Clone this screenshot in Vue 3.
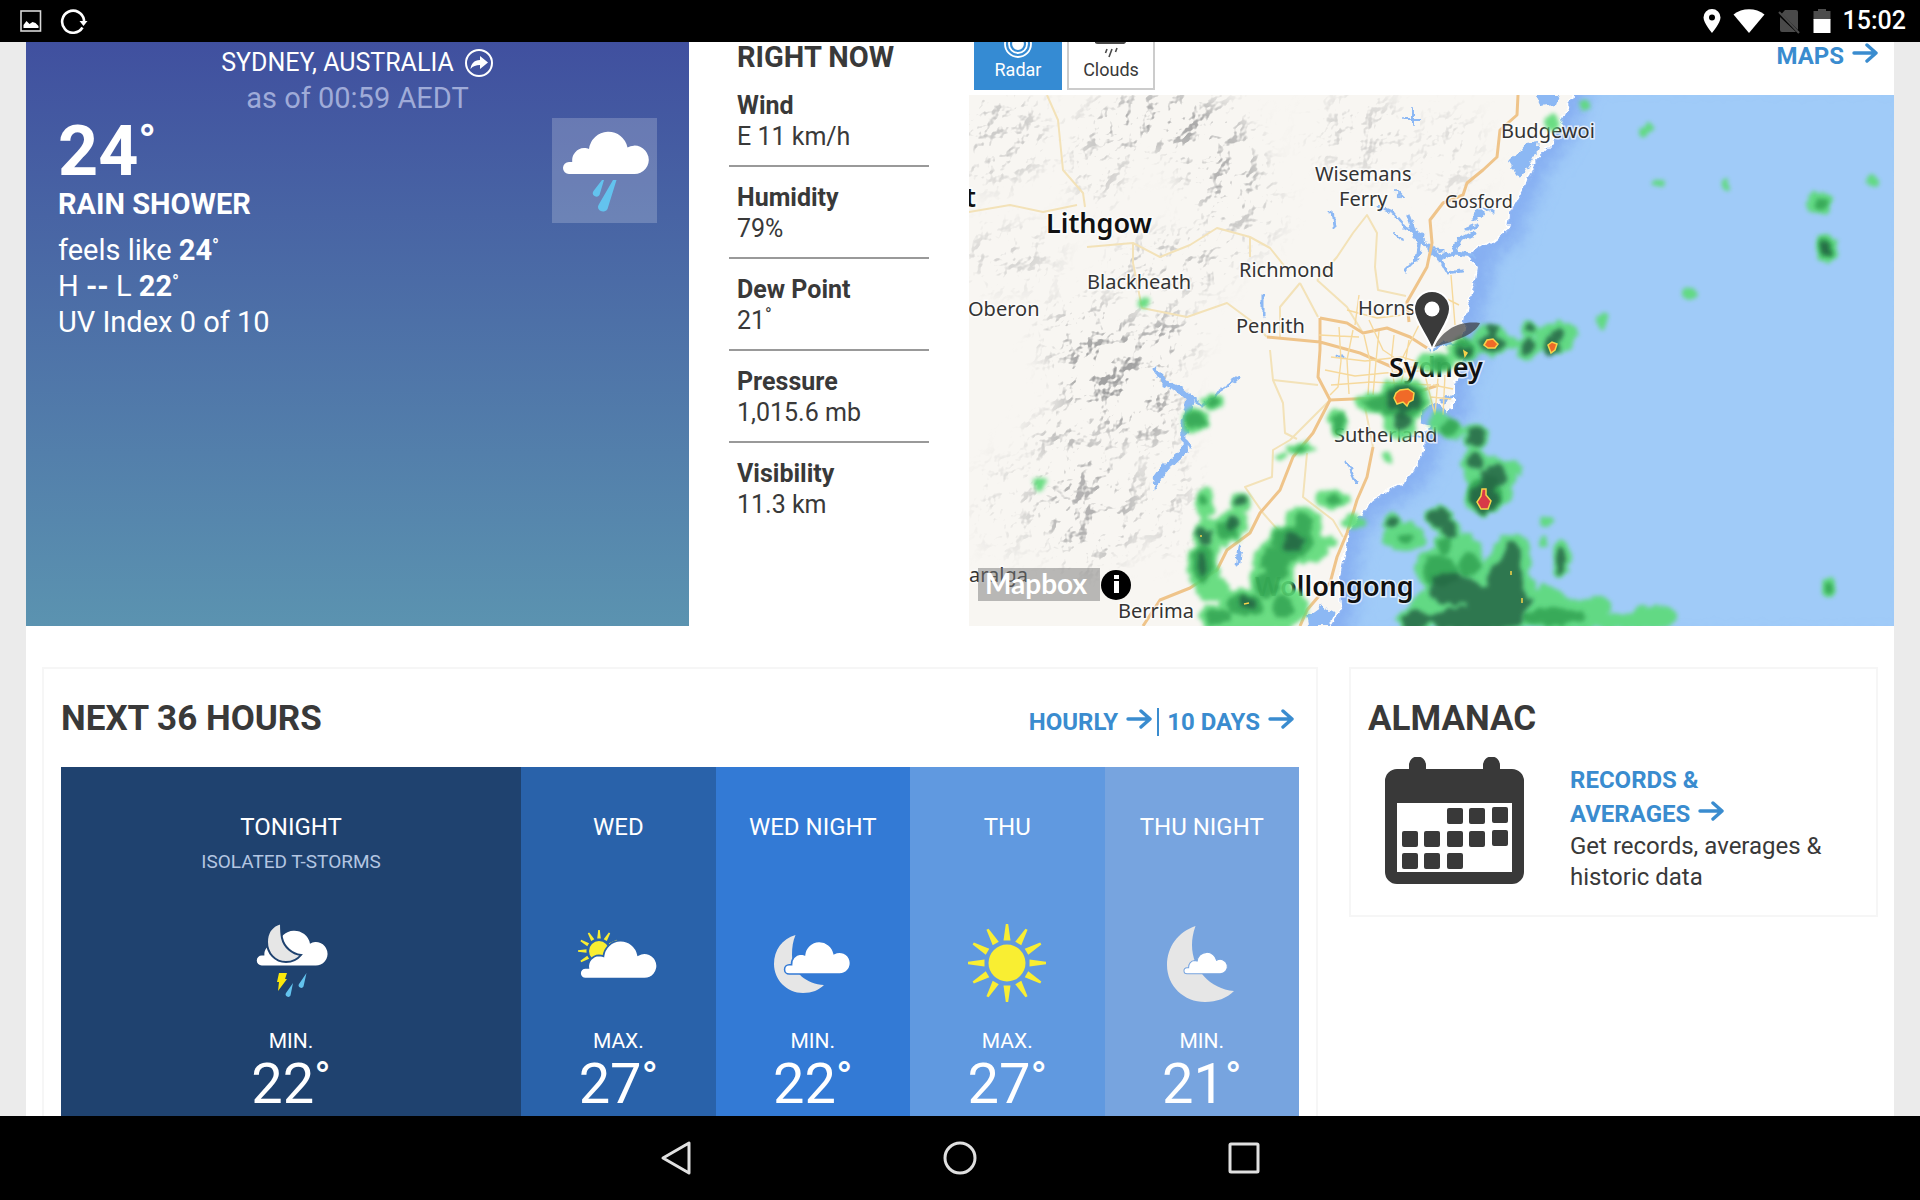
<template>
  <div class="screen">
    <svg class="sprite" aria-hidden="true">
      <symbol id="arrow" viewBox="0 0 26 20">
        <path d="M2 10H24M15 2l9 8-9 8" fill="none" stroke="currentColor" stroke-width="3.4" stroke-linecap="round" stroke-linejoin="round" />
      </symbol>
      <path
        id="cloud"
        d="M17 56a6 6 0 0 1 0-12h3.2A12.5 12.5 0 0 1 32 30c2 0 3.5.4 5 1a19.5 19.5 0 0 1 38.5-1.5A14.2 14.2 0 1 1 82 56z"
      />
    </svg>

    <header class="status-bar">
      <div class="status-left">
        <svg width="22" height="22" viewBox="0 0 22 22">
          <rect x="1" y="1" width="19.5" height="20" fill="none" stroke="#d8d8d8" stroke-width="1.6" />
          <path d="M3.500 18v-3l3-4 3 3 3-2 3 1 3 3v2z" fill="#fff" />
        </svg>
        <svg width="28" height="26" viewBox="0 0 28 26">
          <path d="M22.500 19.500A11 11 0 1 1 24 12v3" fill="none" stroke="#fff" stroke-width="2.6" />
          <path d="M19.500 13h8l-4 5z" fill="#fff" />
        </svg>
      </div>
      <div class="status-right">
        <svg width="18" height="26" viewBox="0 0 18 26">
          <path fill="#fff" fill-rule="evenodd" d="M9 1a8.500 8.500 0 0 1 8.500 8.500C17.500 15 9 25 9 25S.5 15 .5 9.500A8.500 8.500 0 0 1 9 1zm0 5.500a3 3 0 1 0 0 6 3 3 0 0 0 0-6z" />
        </svg>
        <svg width="32" height="26" viewBox="0 0 32 26">
          <path fill="#fff" d="M0.500 6.500C9-.5 23-.5 31.500 6.500L16 25z" />
        </svg>
        <svg width="24" height="26" viewBox="0 0 24 26">
          <path fill="#4a4a4a" d="M8 2h11a2 2 0 0 1 2 2v18L4.500 6zM3 9l16 15H5a2 2 0 0 1-2-2z" />
          <path d="M2 4l20 21" stroke="#4a4a4a" stroke-width="2" />
        </svg>
        <svg width="18" height="26" viewBox="0 0 18 26">
          <path fill="#4d4d4d" d="M5 1h8v2h4.500v9H.5V3H5z" />
          <path fill="#fff" d="M.5 11h17v14H.5z" />
        </svg>
        <span class="clock">15:02</span>
      </div>
    </header>

    <main class="page">
      <div class="sheet">
        <section class="overview">
          <div class="current">
            <p class="place">
              SYDNEY, AUSTRALIA
              <button class="share" type="button" aria-label="Share">
                <svg width="30" height="30" viewBox="0 0 30 30">
                  <circle cx="15" cy="15" r="13" fill="none" stroke="#fff" stroke-width="2" />
                  <path d="M16 8l8 6.500-8 6.500v-4c-4 0-7 1-9.500 4C7 16 10 12 16 12z" fill="#fff" />
                </svg>
              </button>
            </p>
            <p class="as-of">as of 00:59 AEDT</p>
            <div class="now">
              <div>
                <p class="now-temp">24<span class="deg">°</span></p>
                <p class="phrase">RAIN SHOWER</p>
                <p class="facts">feels like <b>24<span class="deg">°</span></b></p>
                <p>H <b>--</b> L <b>22<span class="deg">°</span></b></p>
                <p>UV Index 0 of 10</p>
              </div>
              <svg class="now-icon" viewBox="0 0 105 105">
                <use href="#cloud" fill="#fff" />
                <path d="M61 62 46.500 87a5 4.500 0 0 0 9 4L64.500 62zM50 62 41.500 73a3 3 0 0 0 6 4L52 62z" fill="#63c3ee" />
              </svg>
            </div>
          </div>

          <div class="right-now">
            <h2>RIGHT NOW</h2>
            <dl>
              <div v-for="d in details" :key="d.label" class="detail">
                <dt>{{ d.label }}</dt>
                <dd>{{ d.value }}<span v-if="d.degree" class="deg">°</span></dd>
              </div>
            </dl>
          </div>

          <div class="radar">
            <div class="radar-head">
              <button class="tab active" type="button">
                <svg width="28" height="28" viewBox="0 0 28 28" fill="none" stroke="#fff" stroke-width="1.8">
                  <circle cx="14" cy="14" r="13" />
                  <circle cx="14" cy="14" r="9" />
                  <circle cx="14" cy="14" r="5" fill="#fff" />
                </svg>
                Radar
              </button>
              <button class="tab" type="button">
                <svg width="32" height="28" viewBox="0 0 32 28">
                  <path d="M3 14a4 4 0 0 1 0-8C5 0 12-4 18 1c6-2 10 0 11 5a4.500 4.500 0 0 1 0 8z" fill="#4a4a4a" />
                  <path d="M12 19l-1.500 4M17 19l-3 8M22 18l-1.500 4" stroke="#4a4a4a" stroke-width="1.600" />
                </svg>
                Clouds
              </button>
              <a class="more" href="#maps">MAPS <svg class="arrow"><use href="#arrow" /></svg></a>
            </div>
            <svg class="map" viewBox="0 0 925 531" preserveAspectRatio="xMidYMid slice">
              <defs>
                <filter id="relief" x="0" y="0" width="100%" height="100%" color-interpolation-filters="sRGB">
                  <feTurbulence type="fractalNoise" baseFrequency="0.035 0.035" numOctaves="4" seed="8" />
                  <feDiffuseLighting surfaceScale="14" lighting-color="#fff">
                    <feDistantLight azimuth="225" elevation="55" />
                  </feDiffuseLighting>
                  <feColorMatrix values="0 0 0 0 .63  0 0 0 0 .63  0 0 0 0 .63  -2.600 0 0 0 1.500" />
                  <feGaussianBlur stdDeviation="0.600" />
                  <feComposite in2="SourceAlpha" operator="in" />
                </filter>
                <filter id="ragged" x="-5%" y="-5%" width="110%" height="110%">
                  <feTurbulence type="fractalNoise" baseFrequency="0.090" numOctaves="2" seed="3" result="n" />
                  <feDisplacementMap in="SourceGraphic" in2="n" scale="11" xChannelSelector="R" yChannelSelector="G" />
                  <feGaussianBlur stdDeviation="2" />
                </filter>
                <filter id="shore" x="-5%" y="-5%" width="110%" height="110%">
                  <feTurbulence type="fractalNoise" baseFrequency="0.100" numOctaves="3" seed="5" result="n" />
                  <feDisplacementMap in="SourceGraphic" in2="n" scale="9" xChannelSelector="R" yChannelSelector="G" />
                </filter>
                <filter id="soft"><feGaussianBlur stdDeviation="14" /></filter>
                <filter id="shallow"><feGaussianBlur stdDeviation="9" /></filter>
                <mask id="hills">
                  <g filter="url(#soft)" fill="#fff">
                    <ellipse v-for="(h, i) in hills" :key="i" :cx="h[0]" :cy="h[1]" :rx="h[2]" :ry="h[3]" :opacity="h[4]" />
                  </g>
                </mask>
                <clipPath id="sea"><path :d="coast" /></clipPath>
              </defs>
              <rect width="925" height="531" fill="#f8f6f2" />
              <g mask="url(#hills)"><rect width="620" height="531" filter="url(#relief)" /></g>

              <g filter="url(#shore)">
                <path :d="coast" fill="#a0cbf8" stroke="#fff" stroke-width="3" />
                <g clip-path="url(#sea)">
                  <path :d="coast" fill="none" stroke="#86aff2" stroke-width="30" filter="url(#shallow)" />
                </g>
                <g fill="#8cb8f4">
                  <path d="M544 62l12-14 14-2-2 12-14 22-8 2-6-10zM566 0h24l-4 10-14 2zM452 314l18-6 8 12-12 12-14-4zM338 520l14-10 14 8-6 13h-20z" />
                </g>
                <g fill="none" stroke="#8cb8f4" stroke-linecap="round" stroke-linejoin="round">
                  <path d="M190 280l6 8 14 6 11 10M221 304l-6 26 1 26-20 17-10 14" stroke-width="6" />
                  <path d="M186 273l8 12M221 302l12 9 15-13 23-15M214 340l8 12M196 373l-11 20" stroke-width="3" />
                  <path d="M504 160l-18-2-14 6-12-10M486 158l4-12 16-8M452 140l-4 24M440 122l10 28M506 124l6-8" stroke-width="5" />
                  <path d="M460 154l-12-16-14-8-10-12-14-6M448 164l-12 12M460 150l14 8M470 164l8 14 14-2M516 112l8 6M498 134l10-4M496 250l-16-2-18 6M486 300l-12 6M456 344l-24-4M271 452l-3 20M377 366l10 22M294 202v18M362 116l2 16M368 262h8" stroke-width="3" />
                  <path d="M436 24h16M444 14v16M434 104l-8-8M424 140l12 4" stroke-width="2" />
                </g>
              </g>

              <g fill="none" stroke-linejoin="round">
                <path v-for="(r, i) in roads" :key="i" :d="r.d" :stroke="r.major ? '#efc48a' : '#f3e2b8'" :stroke-width="r.major ? 3 : 2" />
                <path :d="streets" stroke="#f6d99c" stroke-width="1.400" />
              </g>

              <g class="labels">
                <text
                  v-for="p in places"
                  :key="p.name"
                  :x="p.x"
                  :y="p.y"
                  :class="{ city: p.city, small: p.small }"
                >{{ p.name }}</text>
              </g>

              <g v-for="layer in echoes" :key="layer.color" :fill="layer.color" :opacity="layer.opacity" filter="url(#ragged)">
                <ellipse v-for="(e, i) in layer.cells" :key="i" :cx="e[0]" :cy="e[1]" :rx="e[2]" :ry="e[3]" />
              </g>
              <g stroke="#f7d34a" stroke-width="1.500">
                <path d="M425 303l2-5 4-3 8-1 6 4-1 7-4 2-2 4-4-4-6 2z" fill="#f06a28" />
                <path d="M515 250l3-5 6-1 5 5-3 4h-7z" fill="#f06a28" />
                <path d="M579 250l4-3 5 2-2 6-4 3z" fill="#f06a28" />
                <path d="M513 394h4v6l5 6-3 8h-7l-4-7 4-6z" fill="#d83a48" />
                <path d="M495 256l3 2-2 3zM542 476v4M553 503v5M275 509l5-1M232 440v2" fill="#d9b64a" />
              </g>

              <path d="M465 252c8-16 24-27 46-24-4 10-20 17-46 24z" fill="#3b3b3b" opacity=".7" />
              <path d="M463 255c-4-14-18-28-18-41a18 18 0 0 1 36 0c0 13-14 27-18 41z" fill="#3a3a3a" stroke="#fff" stroke-width="2" />
              <circle cx="463" cy="214" r="7.500" fill="#fff" />

              <rect x="9" y="473" width="122" height="33" fill="#777" opacity=".5" />
              <text class="brand" x="16" y="499">Mapbox</text>
              <circle cx="147" cy="490" r="15" fill="#000" />
              <path d="M145 486h5v12h-5zM145 480h5v4h-5z" fill="#fff" />
            </svg>
          </div>
        </section>

        <section class="cards">
          <div class="card">
            <div class="card-head">
              <h2>NEXT 36 HOURS</h2>
              <nav class="links">
                <a class="more" href="#hourly">HOURLY <svg class="arrow"><use href="#arrow" /></svg></a>
                <a class="more" href="#ten-day">10 DAYS <svg class="arrow"><use href="#arrow" /></svg></a>
              </nav>
            </div>
            <div class="forecast">
              <div v-for="f in forecast" :key="f.name" :class="['period', f.icon]">
                <h3>{{ f.name }}</h3>
                <p class="summary">{{ f.summary }}</p>
                <svg class="icon" viewBox="0 0 96 96">
                  <template v-if="f.icon === 'storm'">
                    <use href="#cloud" fill="#fff" transform="translate(4.700 4.300) scale(.825)" />
                    <path class="cut" fill="#e6e6e6" d="M38 8C28 11 24 19 24 27c0 11 8 20 19 20 6 0 11-2 15-7-9-1-17-8-19-17-1-5-1-10-1-15z" />
                    <path fill="#fbe80c" d="M36 58h8l-2 6h2L35 76l1-9h-2z" />
                    <path fill="#63c3ee" d="M63.500 58 56 69a2.500 2.500 0 0 0 4.500 2.500zM50 68l-7 10a2.500 2.500 0 0 0 4.500 2.500z" />
                  </template>
                  <template v-else-if="f.icon === 'partly'">
                    <g fill="#f9ee32" transform="translate(29 36)">
                      <circle r="10" />
                      <path v-for="n in 12" :key="n" d="M-1.800-12.500-.8-21H.8L1.800-12.500z" :transform="`rotate(${n * 30})`" />
                    </g>
                    <use class="cut" href="#cloud" fill="#fff" transform="translate(.1 13.300) scale(.9)" />
                  </template>
                  <template v-else-if="f.icon === 'cloudy-night'">
                    <path fill="#e6e6e6" d="M30.500 20C17 24 9 35 9 49c0 16 13 29 29 29 9 0 16-3 21-8C42 69 27 58 27 40c0-8 1-14 3.500-20z" />
                    <use class="cut" href="#cloud" fill="#fff" transform="translate(11.100 16) scale(.768)" />
                  </template>
                  <g v-else-if="f.icon === 'sunny'" fill="#f9ee32" transform="translate(48 48)">
                    <circle r="18.500" />
                    <path v-for="n in 12" :key="n" d="M-3.500-22.500-1.200-39H1.200L3.500-22.500z" :transform="`rotate(${n * 30})`" />
                  </g>
                  <template v-else>
                    <path fill="#e6e6e6" d="M41.500 11C24 17 13 32 13 50c0 21 17 37 38 37 12 0 22-4 29-11-24-2-42-22-42-46 0-6 1-12 3.500-19z" />
                    <use class="cut" href="#cloud" fill="#fff" transform="translate(24.400 30.400) scale(.506)" />
                  </template>
                </svg>
                <p class="kind">{{ f.kind }}</p>
                <p class="temp">{{ f.temp }}<span class="deg">°</span></p>
              </div>
            </div>
          </div>

          <div class="card almanac">
            <div class="card-head"><h2>ALMANAC</h2></div>
            <div class="almanac-body">
              <svg width="140" height="128" viewBox="0 0 140 128">
                <path
                  fill="#393939"
                  fill-rule="evenodd"
                  d="M12 12h12V8a8 8 0 0 1 17 0v4h57V8a8 8 0 0 1 17 0v4h12a12 12 0 0 1 12 12v91a12 12 0 0 1-12 12H12a12 12 0 0 1-12-12V24a12 12 0 0 1 12-12zM12 46v69h115V46z"
                />
                <rect v-for="(c, i) in calendar" :key="i" :x="c[0]" :y="c[1]" width="16" height="16" rx="2" fill="#393939" />
              </svg>
              <div class="almanac-text">
                <a class="more" href="#almanac">RECORDS &amp;<br />AVERAGES <svg class="arrow"><use href="#arrow" /></svg></a>
                <p>Get records, averages &amp; historic data</p>
              </div>
            </div>
          </div>
        </section>
      </div>
    </main>

    <footer class="nav-bar">
      <button type="button" aria-label="Back">
        <svg viewBox="0 0 36 36"><path d="M31 3v30L5 18z" /></svg>
      </button>
      <button type="button" aria-label="Home">
        <svg viewBox="0 0 36 36"><circle cx="18" cy="18" r="15" /></svg>
      </button>
      <button type="button" aria-label="Recent apps">
        <svg viewBox="0 0 36 36"><rect x="4" y="4" width="28" height="28" rx="1" /></svg>
      </button>
    </footer>
  </div>
</template>

<script setup>
const details = [
  { label: 'Wind', value: 'E 11 km/h' },
  { label: 'Humidity', value: '79%' },
  { label: 'Dew Point', value: '21', degree: true },
  { label: 'Pressure', value: '1,015.6 mb' },
  { label: 'Visibility', value: '11.3 km' },
]

const forecast = [
  { name: 'TONIGHT', summary: 'ISOLATED T-STORMS', icon: 'storm', kind: 'MIN.', temp: 22 },
  { name: 'WED', icon: 'partly', kind: 'MAX.', temp: 27 },
  { name: 'WED NIGHT', icon: 'cloudy-night', kind: 'MIN.', temp: 22 },
  { name: 'THU', icon: 'sunny', kind: 'MAX.', temp: 27 },
  { name: 'THU NIGHT', icon: 'clear-night', kind: 'MIN.', temp: 21 },
]

const calendar = [
  [62, 51], [84, 51], [107, 50],
  [17, 74], [39, 74], [62, 74], [84, 74], [107, 73],
  [17, 96], [39, 96], [62, 96],
]

// map, all in viewBox units
const coast =
  'M603 0L596 18 583 48 564 68 556 92 541 118 539 135 524 147 509 152 498 162 509 172 506 192 499 210 494 238 498 262 484 292 484 315 467 322 456 338 455 357 446 375 438 385 404 405 381 432 376 455 371 482 373 512 361 531 361 560H960V-30H603z'

const hills = [
  [30, 40, 50, 50, 0.5], [190, 25, 60, 30, 0.9], [250, 60, 40, 50, 0.7], [40, 160, 50, 30, 0.4],
  [130, 60, 30, 50, 0.5], [270, 110, 40, 50, 0.5], [200, 170, 60, 30, 0.6], [120, 240, 50, 40, 0.6],
  [140, 280, 50, 50, 1], [170, 310, 40, 40, 0.9], [90, 340, 30, 20, 0.7], [120, 410, 50, 60, 0.8],
  [200, 400, 20, 60, 0.5], [40, 410, 30, 50, 0.3], [390, 40, 50, 40, 0.4], [480, 60, 30, 50, 0.3],
  [200, 240, 25, 25, 1],
]

const roads = [
  { d: 'M78 0l11 25 5 50 20 23 2 14M0 117l41-7 33 7 34-7M118 152l46-4 27 14 30-12 27-17 33 9 20 11 20 25M164 148v20l9 45 45 9 40-14 23 17 17 17' },
  { d: 'M301 255l3 30 10 23 2 30 12 6M361 305l-40 40-17 10-1 27-27 10 18 26 15 17M338 358l-4 44 30 23 10 17' },
  { d: 'M331 188l-20 24v30M331 188l18 34M348 185l30 27 16 26M348 185l20-23 16-24 14-18 10 18-2 34 3 23 28 6' },
  { d: 'M304 285l45 5M281 142v20M404 352l-8-40' },
  { d: 'M298 242l53 5 40 11 39 17 33-5M351 223v32l-2 27 12 23-17 33-20 24-13 33-20 23-10 20-23 17-10 20-27 18-30 12-17 26', major: true },
  { d: 'M351 223l27 5 16 10 24-5 23 9 17 11M361 305l23-1 46-1 40-13', major: true },
  { d: 'M549 0l-1 20-17 15-3 27-14 13-16 13-4 12-20 8-13 17 2 23-5 24-20 35 2 20', major: true },
  { d: 'M404 352l-6 30-10 23-10 33-10 24-7 26-23 27-7 16', major: true },
]

const streets =
  'M370 232l2 34-3 26-8 8M384 235l-6 30 2 34M395 240l6 26-2 34M410 236l-3 30-3 34M425 240l-3 28 5 32M440 245l-4 24-6 31M362 262l34 4 36-4 30 8M356 275l30 6 30-3 50-3M362 290l40-3 60 3M470 270l-4 50M476 280l-2 40M456 280l10 40M482 180l4 50M470 200l20 10M440 210l20 25M378 215l30 8 26-3M400 225l14 30 30 20M450 230l-20 40M390 200l-4 30M464 290l20 4M462 302l20 2M350 240l40 2'

const places = [
  { name: 't', x: -4, y: 112, city: true },
  { name: 'Lithgow', x: 77, y: 138, city: true },
  { name: 'Sydney', x: 420, y: 282, city: true },
  { name: 'Wollongong', x: 286, y: 501, city: true },
  { name: 'Blackheath', x: 118, y: 194 },
  { name: 'Oberon', x: -1, y: 221 },
  { name: 'Richmond', x: 270, y: 182 },
  { name: 'Penrith', x: 267, y: 238 },
  { name: 'Wisemans', x: 346, y: 86 },
  { name: 'Ferry', x: 370, y: 111 },
  { name: 'Horns', x: 389, y: 220 },
  { name: 'Budgewoi', x: 532, y: 43 },
  { name: 'Gosford', x: 476, y: 113, small: true },
  { name: 'Sutherland', x: 365, y: 347 },
  { name: 'Berrima', x: 149, y: 523 },
  { name: 'aralga', x: 0, y: 487 },
]

const echoes = [
  {
    color: '#5bdb78',
    opacity: 0.9,
    cells: [
      [467, 267, 18, 11], [494, 255, 16, 12], [522, 245, 19, 16], [543, 248, 8, 6], [561, 235, 10, 8], [559, 253, 11, 13],
      [586, 244, 19, 17], [600, 238, 10, 10], [632, 227, 6, 7], [434, 305, 27, 22], [406, 308, 19, 10], [432, 328, 16, 16],
      [472, 328, 10, 10], [484, 336, 11, 9], [506, 340, 12, 13], [505, 367, 14, 15], [522, 382, 24, 20], [542, 373, 12, 8],
      [515, 402, 20, 19], [534, 396, 10, 13], [422, 427, 9, 8], [436, 442, 21, 14], [470, 423, 15, 12], [481, 435, 10, 11],
      [475, 450, 12, 12], [494, 460, 20, 22], [470, 475, 24, 22], [543, 462, 19, 24], [534, 480, 24, 26], [489, 494, 34, 30],
      [510, 512, 70, 26], [556, 498, 12, 22], [577, 507, 17, 17], [598, 520, 44, 16], [625, 512, 18, 11], [684, 522, 23, 12],
      [653, 526, 34, 9], [446, 525, 20, 13], [592, 465, 10, 19], [577, 427, 7, 5], [575, 448, 5, 5], [859, 492, 8, 10],
      [419, 363, 6, 6], [616, 10, 5, 6], [678, 35, 7, 5], [583, 28, 7, 9], [688, 88, 6, 5], [756, 88, 5, 4],
      [904, 86, 6, 6], [849, 107, 13, 11], [857, 153, 11, 14], [721, 198, 8, 6], [633, 223, 6, 5], [244, 308, 11, 9],
      [226, 325, 12, 12], [369, 328, 9, 13], [331, 354, 14, 7], [313, 362, 6, 4], [71, 389, 6, 5], [236, 408, 9, 17],
      [271, 407, 12, 10], [264, 428, 16, 14], [239, 444, 16, 20], [256, 438, 16, 13], [234, 470, 15, 28], [244, 494, 19, 12],
      [364, 404, 15, 10], [384, 427, 12, 7], [334, 432, 20, 20], [326, 448, 26, 21], [308, 466, 22, 24], [344, 452, 15, 16],
      [361, 448, 7, 6], [302, 486, 22, 18], [276, 508, 26, 16], [311, 512, 28, 22], [250, 522, 20, 13], [284, 528, 44, 10],
      [174, 207, 6, 5],
    ],
  },
  {
    color: '#2c9b4b',
    opacity: 0.75,
    cells: [
      [244, 308, 7, 5], [226, 325, 9, 9], [369, 328, 6, 9], [331, 354, 8, 3], [236, 404, 5, 6], [258, 436, 11, 9],
      [234, 468, 10, 21], [324, 448, 20, 17], [306, 468, 15, 17], [364, 404, 9, 5], [276, 510, 18, 11], [250, 522, 13, 9],
      [408, 308, 13, 6], [480, 333, 10, 7], [470, 268, 10, 8], [494, 255, 11, 10], [472, 475, 18, 16], [852, 108, 7, 5],
      [857, 153, 7, 10], [859, 493, 4, 4], [585, 522, 34, 8], [516, 398, 17, 17], [476, 450, 8, 8], [434, 306, 22, 17],
      [334, 430, 10, 11], [298, 490, 12, 12], [314, 512, 10, 12], [436, 444, 8, 5], [500, 468, 10, 12],
    ],
  },
  {
    color: '#205f43',
    opacity: 0.8,
    cells: [
      [522, 249, 13, 9], [523, 235, 7, 7], [561, 235, 5, 5], [559, 253, 6, 9], [583, 252, 10, 10], [588, 240, 5, 6],
      [495, 257, 7, 6], [434, 304, 17, 13], [432, 326, 10, 9], [506, 340, 9, 10], [505, 367, 9, 8], [524, 382, 14, 13],
      [515, 404, 14, 15], [422, 427, 6, 5], [470, 423, 12, 10], [481, 435, 6, 9], [543, 460, 9, 13], [536, 486, 18, 22],
      [486, 494, 24, 16], [529, 508, 32, 18], [505, 524, 48, 12], [446, 525, 14, 10], [592, 467, 6, 14], [271, 407, 7, 5],
      [264, 427, 8, 6], [234, 440, 9, 8], [233, 468, 4, 12], [325, 448, 10, 9], [278, 508, 9, 6], [857, 153, 4, 7],
    ],
  },
]
</script>

<style>
body {
  margin: 0;
  background: #000;
}
</style>

<style scoped>
.screen {
  display: flex;
  flex-direction: column;
  height: 100vh;
  overflow: hidden;
  font-family: Roboto, "Liberation Sans", sans-serif;
  color: #393939;
}
.sprite {
  position: absolute;
  width: 0;
  height: 0;
}
p, h2, h3, dl, dd {
  margin: 0;
}
svg {
  flex-shrink: 0;
}
button {
  padding: 0;
  border: 0;
  background: none;
  font: inherit;
  color: inherit;
  cursor: pointer;
}

.status-bar {
  display: flex;
  flex-shrink: 0;
  align-items: center;
  justify-content: space-between;
  height: 42px;
  padding: 0 14px 0 20px;
  background: #000;
  color: #fff;
}
.status-left, .status-right {
  display: flex;
  align-items: center;
  gap: 18px;
}
.status-right {
  gap: 12px;
}
.clock {
  font-size: 25px;
  font-weight: 500;
  line-height: 46px;
}

.page {
  flex: 1;
  min-height: 0;
  overflow: hidden;
  padding: 0 26px;
  background: #ebebeb;
}
.sheet {
  display: flex;
  flex-direction: column;
  height: 100%;
  background: #fff;
}
.overview {
  display: grid;
  flex-shrink: 0;
  grid-template-columns: 663fr 280fr 925fr;
}
.current {
  padding: 4px 32px 0;
  background: linear-gradient(#40509f, #5b93b0);
  color: #fff;
  font-size: 29px;
  line-height: 36px;
}
.place {
  display: flex;
  align-items: center;
  justify-content: center;
  gap: 10px;
  font-size: 25px;
  line-height: 34px;
}
.share {
  display: flex;
}
.as-of {
  color: #9fabd8;
  text-align: center;
}
.now {
  display: flex;
  justify-content: space-between;
  margin-top: 2px;
}
.now-temp {
  font-size: 70px;
  font-weight: 700;
  line-height: 66px;
}
.now-icon {
  width: 105px;
  height: 105px;
  background: rgba(255, 255, 255, 0.2);
}
.phrase {
  font-weight: 700;
  line-height: 40px;
}
.facts {
  margin-top: 8px;
}
.deg {
  font-size: 18px;
  line-height: 1;
  vertical-align: 8px;
}
.now-temp .deg {
  font-size: 46px;
  vertical-align: 18px;
}

.right-now {
  padding: 0 40px;
}
.right-now h2 {
  margin-bottom: 3px;
  padding-left: 8px;
  font-size: 29px;
  line-height: 30px;
}
.detail {
  padding: 15px 0 13px 8px;
  border-bottom: 2px solid #999;
  font-size: 25px;
  line-height: 31px;
}
.detail:last-child {
  border-bottom: 0;
}
.detail dt {
  font-weight: 700;
}

.radar-head {
  display: flex;
  align-items: flex-end;
  gap: 5px;
  height: 53px;
  padding: 0 16px 5px 5px;
  box-sizing: border-box;
}
.tab {
  display: flex;
  flex-shrink: 0;
  flex-direction: column;
  align-items: center;
  justify-content: flex-end;
  box-sizing: border-box;
  width: 88px;
  height: 84px;
  padding-bottom: 6px;
  border: 2px solid #ccc;
  font-size: 18px;
  line-height: 24px;
}
.tab.active {
  border-color: #358bd3;
  background: #358bd3;
  color: #fff;
}
.more {
  color: #3a8ccf;
  font-size: 24px;
  font-weight: 700;
  text-decoration: none;
}
.arrow {
  width: 26px;
  height: 20px;
  margin-left: 2px;
  vertical-align: 1px;
}
.radar-head .more {
  align-self: flex-start;
  margin-left: auto;
  line-height: 28px;
}
.map {
  display: block;
  width: 100%;
  aspect-ratio: 925 / 531;
}
.labels {
  fill: #333;
  font-family: "Noto Sans", "Open Sans", sans-serif;
  font-size: 20px;
  paint-order: stroke;
  stroke: rgba(255, 255, 255, 0.7);
  stroke-width: 3px;
}
.labels .small {
  font-size: 18px;
}
.labels .city {
  fill: #111;
  font-size: 27px;
  font-weight: 600;
}
.brand {
  fill: #fff;
  font-family: Lato, sans-serif;
  font-size: 28px;
  font-weight: 700;
}

.cards {
  display: grid;
  flex: 1;
  grid-template-columns: 1276fr 529fr;
  gap: 31px;
  align-items: start;
  margin-top: 41px;
  padding: 0 16px;
}
.card {
  padding: 22px 17px;
  border: 2px solid #f6f6f6;
}
.card-head {
  display: flex;
  align-items: baseline;
  justify-content: space-between;
  margin-bottom: 20px;
}
.card-head h2 {
  font-size: 35px;
  line-height: 56px;
}
.links .more {
  display: inline-block;
  padding: 0 5px 0 8px;
  line-height: 28px;
}
.links .more + .more {
  border-left: 2px solid #3a8ccf;
}
.forecast {
  display: grid;
  grid-template-columns: 459fr 194fr 194fr 194fr 194fr;
}
.period {
  --tone: #1f426f;
  display: flex;
  flex-direction: column;
  align-items: center;
  padding: 44px 0 40px;
  background: var(--tone);
  color: #fff;
}
.period.partly {
  --tone: #2962aa;
}
.period.cloudy-night {
  --tone: #337ad5;
}
.period.sunny {
  --tone: #6099e0;
}
.period.clear-night {
  --tone: #77a4df;
}
.period h3 {
  font-size: 24px;
  font-weight: 400;
  line-height: 32px;
}
.summary {
  height: 37px;
  color: #b4c6e2;
  font-size: 19px;
  line-height: 37px;
}
.icon {
  width: 96px;
  height: 96px;
  margin: 35px 0 16px;
}
.cut {
  stroke: var(--tone);
  stroke-width: 2px;
}
.kind {
  font-size: 21px;
  line-height: 28px;
}
.temp {
  font-size: 56px;
  line-height: 58px;
}
.temp .deg {
  font-size: 44px;
  vertical-align: 10px;
}

.almanac {
  padding-bottom: 22px;
}
.almanac .card-head {
  margin-bottom: 10px;
}
.almanac-body {
  display: flex;
  gap: 45px;
  padding-left: 17px;
}
.almanac-text {
  padding-top: 6px;
  font-size: 24px;
  line-height: 31px;
}
.almanac-text .more {
  display: block;
  line-height: 34px;
}

.nav-bar {
  display: flex;
  flex-shrink: 0;
  align-items: center;
  justify-content: center;
  gap: 248px;
  height: 84px;
  background: #000;
}
.nav-bar button {
  display: flex;
  width: 36px;
  height: 36px;
}
.nav-bar svg {
  width: 36px;
  fill: none;
  stroke: #e0e0e0;
  stroke-width: 3px;
  stroke-linejoin: round;
}
</style>
